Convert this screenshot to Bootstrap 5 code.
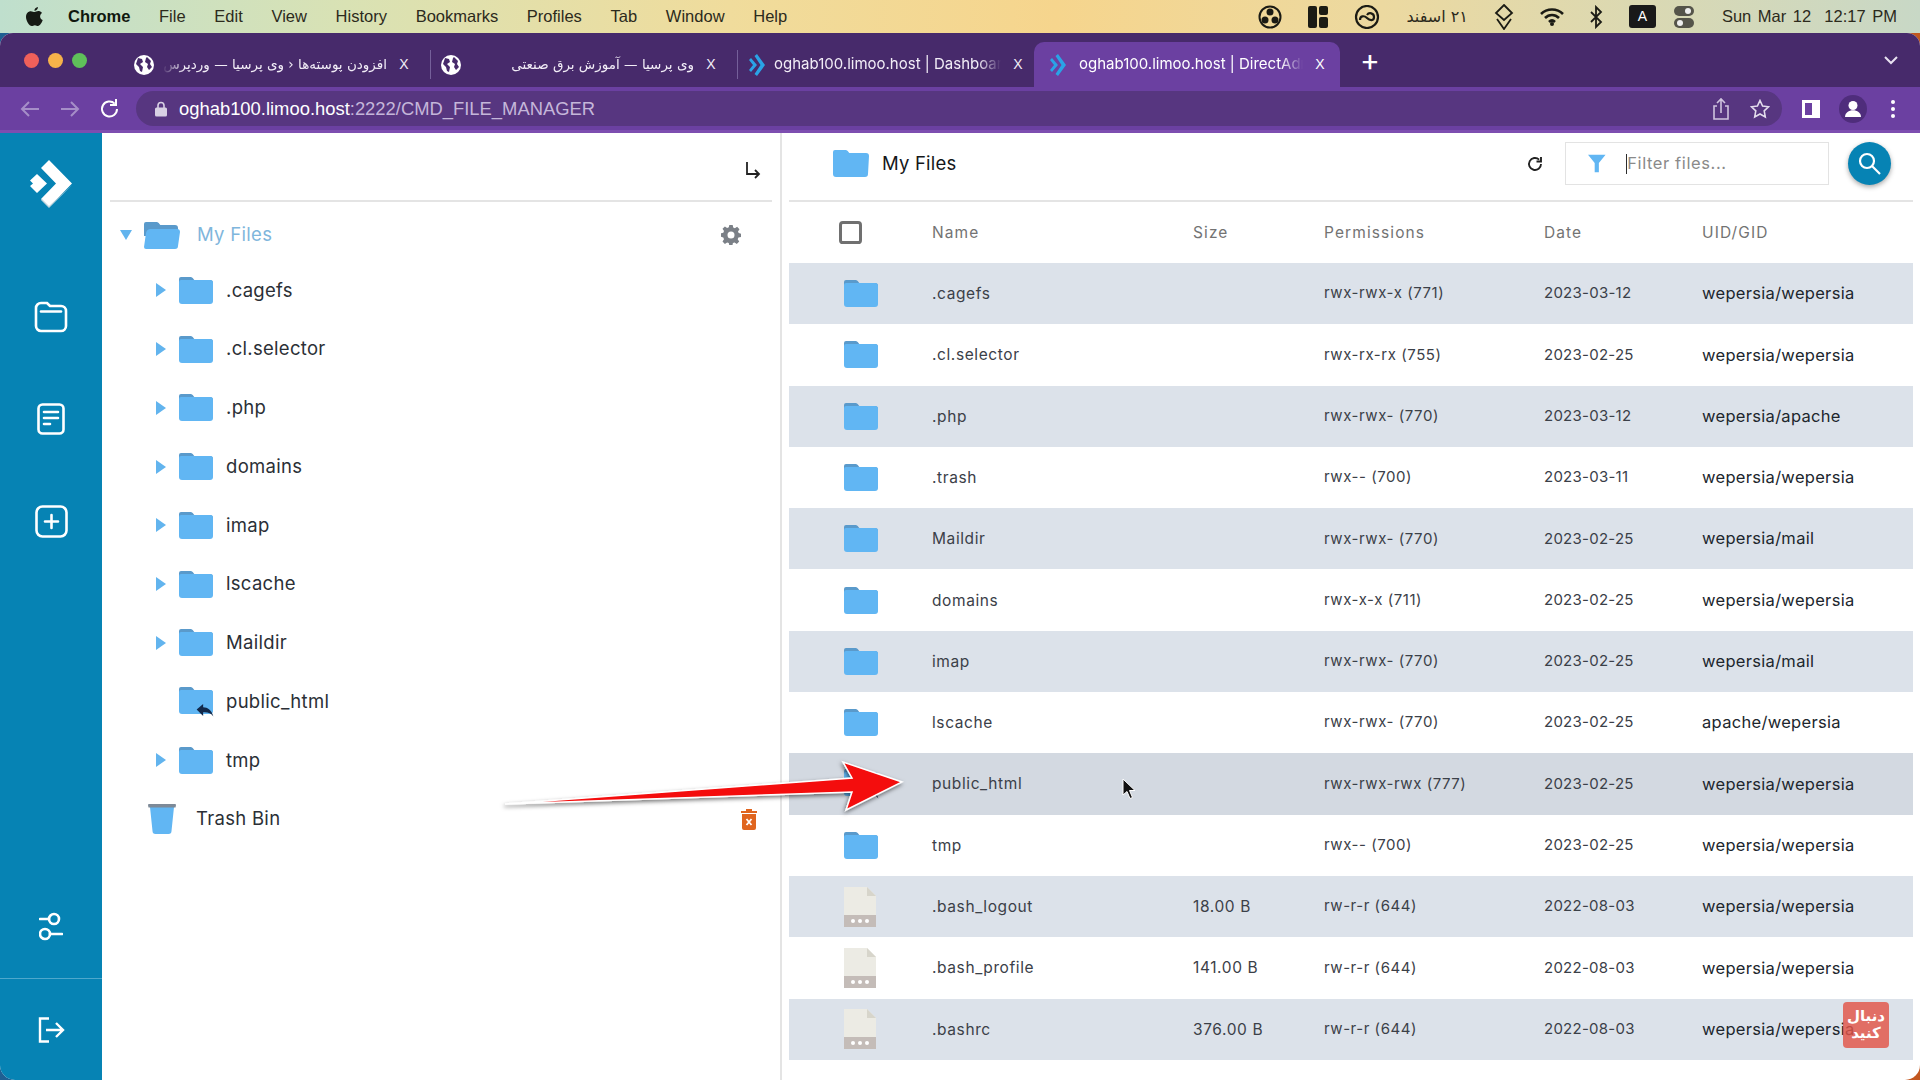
<!DOCTYPE html>
<html lang="en">
<head>
    <meta charset="UTF-8">
    <meta name="viewport" content="width=device-width, initial-scale=1.0">
    <title>oghab100.limoo.host | DirectAdmin</title>
    <link href="https://cdn.jsdelivr.net/npm/bootstrap@5.3.3/dist/css/bootstrap.min.css" rel="stylesheet">
    <style>
        html, body { height: 100%; }
        body { width: 1920px; height: 1080px; overflow: hidden; position: relative; font-family: Inter, "Liberation Sans", sans-serif; background: linear-gradient(90deg, #1f5f92 0, #1f5f92 50%, #c2571f 50%, #c2571f 100%); }

        .mac-bar { height: 33px; padding: 0 23px 0 26px; font-family: "Liberation Sans", sans-serif; font-size: 16.5px; color: #2c2a1c; background: linear-gradient(90deg, #bfdfcd 0, #d9e2b4 18%, #f0dc9c 38%, #f6d58d 55%, #ecd9a0 72%, #c8d8c6 100%); }
        .mac-menu { gap: 28.7px; margin-left: 25px; }
        .mac-app { font-weight: 700; color: #10180f; }
        .mac-tray { gap: 26px; }
        .mac-clock { word-spacing: 2px; margin-left: 2px; }
        .mac-fa { font-family: "DejaVu Sans", sans-serif; font-size: 16px; }
        .key-a { width: 27px; height: 23px; background: #191919; color: #fff; border-radius: 3px; font-size: 14px; }
        .mac-toggle { margin-left: -8px; }

        .win { height: 1047px; border-radius: 13px 13px 15px 15px; overflow: hidden; background: #fff; }
        .tab-strip { height: 54px; background: #472a6b; padding-left: 24px; position: relative; }
        .win-dots { gap: 9px; width: 100px; }
        .win-dot { width: 15px; height: 15px; border-radius: 50%; }
        .dot-red { background: #f0605a; }
        .dot-amber { background: #f6b24a; }
        .dot-green { background: #5fc05a; }
        .tab-item { width: 306px; height: 45px; align-self: flex-end; color: #f2edf7; font-size: 15px; padding: 0 17px 0 10px; position: relative; }
        .tab-on { background: #6b40a1; border-radius: 10px 10px 0 0; color: #fff; margin-left: -10px; padding: 0 11px 0 15px; }
        .tab-on .tab-label { margin-left: 12px; }
        .tab-sep { width: 1px; height: 29px; background: #75609a; align-self: center; margin-top: 8px; }
        .tab-label { flex: 1; overflow: hidden; white-space: nowrap; margin: 0 8px; -webkit-mask-image: linear-gradient(90deg, #000 90%, transparent); mask-image: linear-gradient(90deg, #000 90%, transparent); }
        .tab-fa { font-family: "DejaVu Sans", sans-serif; font-size: 13.5px; direction: rtl; text-align: right; -webkit-mask-image: linear-gradient(270deg, #000 90%, transparent); mask-image: linear-gradient(270deg, #000 90%, transparent); }
        .tab-x { font-size: 14px; font-family: "Liberation Sans", sans-serif; width: 18px; text-align: center; }
        .tab-plus { color: #fff; font-size: 30px; line-height: 1; margin-left: 20px; font-weight: 400; }
        .tab-more { margin-left: auto; margin-right: 22px; }

        .tool-bar { height: 43px; background: #6b40a1; padding: 0 0 0 18px; }
        .tool-ico { width: 24px; height: 24px; }
        .url-pill { height: 35px; width: 1646px; margin-left: 14px; background: #573680; border-radius: 18px; padding: 0 12px 0 19px; color: #c5b6da; font-family: "Liberation Sans", sans-serif; font-size: 18.4px; }
        .url-host { color: #fff; }
        .url-star { margin-left: 20px; }
        .tool-right { gap: 19px; margin-left: 20px; }
        .tool-dots { margin-left: 5px; }
        .strip-line { height: 3px; background: #7d4eb0; }

        .app-main { height: 947px; }
        .side-rail { width: 102px; background: #0683b4; color: #fff; }
        .rail-btn { height: 102px; }
        .rail-logo { margin-bottom: 31px; }
        .rail-foot { border-top: 1px solid #4ea8cc; }

        .tree-pane { width: 680px; border-right: 2px solid #e4e4e4; }
        .pane-head { height: 69px; border-bottom: 2px solid #e4e4e4; }
        .tree-head { margin: 0 8px; padding-right: 11px; padding-top: 8px; }
        .tree-list { padding: 7px 0 0; margin: 0; list-style: none; font-size: 18.5px; color: #2b2f36; letter-spacing: .3px; }
        .tree-row { height: 58.75px; padding-left: 54px; }
        .tree-top { height: 52px; padding-left: 18px; color: #7fb6dc; }
        .tree-bin { padding-left: 46px; }
        .tree-caret { width: 10px; height: 14px; margin-right: 13px; flex: none; }
        .caret-down { width: 12px; height: 10px; margin-right: 12px; }
        .tree-name { margin-left: 13px; }
        .name-top { margin-left: 17px; }
        .name-link { margin-left: 11px; }
        .name-bin { margin-left: 20px; }
        .tree-gear { margin-left: auto; margin-right: 39px; }
        .tree-trash { margin-left: auto; margin-right: 23px; }

        .files-pane { flex: 1; padding: 0 7px; }
        .files-head { padding: 0 0 6px 44px; }
        .files-title { font-size: 18.5px; color: #14171a; margin-left: 13px; letter-spacing: .2px; }
        .reload-btn { margin-left: auto; margin-right: 22px; }
        .filter-box { width: 264px; height: 43px; border: 1px solid #e3e3e3; padding-left: 22px; }
        .filter-caret { width: 2px; height: 20px; background: #2d2d2d; margin-left: 20px; }
        .filter-input { border: 0; padding: 0; font-size: 16.5px; letter-spacing: .6px; box-shadow: none; }
        .filter-input::placeholder { color: #8a8a8a; }
        .find-btn { width: 43px; height: 43px; margin: 0 22px 0 19px; padding: 0; background: #0683b4; border: 0; box-shadow: 0 2px 5px rgba(0,0,0,.35); }

        .file-table { table-layout: fixed; width: 1124px; margin: 0; font-size: 15.5px; color: #3b4048; letter-spacing: .6px; }
        .file-table th, .file-table td { padding: 0; border: 0; vertical-align: middle; background: transparent; box-shadow: none; color: inherit; }
        .file-table thead th { height: 61px; font-weight: 400; color: #737373; letter-spacing: 1.1px; }
        .file-table tbody tr { height: 61.3px; }
        .file-table tbody tr.row-alt td { background: #dce2ea; }
        .file-table tbody tr.row-hover td { background: #d3d9e1; }
        .file-table td.cell-ico { padding-left: 55px; }
        .file-table td.cell-owner { color: #20262d; font-size: 16.5px; letter-spacing: .3px; }
        .file-table td.cell-perm { font-size: 15px; letter-spacing: .55px; }
        .file-table td.cell-date { font-size: 15px; letter-spacing: .25px; }
        .col-tick { width: 143px; }
        .col-name { width: 261px; }
        .col-size { width: 131px; }
        .col-perm { width: 220px; }
        .col-date { width: 158px; }
        .col-owner { width: 211px; }
        .select-all { width: 23px; height: 23px; margin: 0 0 0 50px; border: 3px solid #707070; border-radius: 3px; display: block; }
        .ico-block { display: block; }

        .over-arrow { position: absolute; left: 495px; top: 750px; pointer-events: none; }
        .over-cursor { position: absolute; left: 1122px; top: 778px; }
        .over-follow { position: absolute; left: 1843px; top: 1002px; width: 46px; height: 46px; background: rgba(226,84,72,.82); border-radius: 4px; color: #fff; font-family: "DejaVu Sans", sans-serif; font-weight: 700; font-size: 15px; line-height: 1.15; text-align: center; }
    </style>
</head>
<body>

<svg width="0" height="0" class="position-absolute">
    <symbol id="dir" viewBox="0 0 34 27">
        <path d="M2 0h9c1.500 0 2.500.6 3.500 2l.8 1H31a3 3 0 0 1 3 3v5H0V2a2 2 0 0 1 2-2z" fill="#5a9acb"/>
        <path d="M2 3h29a3 3 0 0 1 3 3v18a3 3 0 0 1-3 3H3a3 3 0 0 1-3-3V5a2 2 0 0 1 2-2z" fill="#61b6f3"/>
    </symbol>
    <symbol id="dir-open" viewBox="0 0 36 27">
        <path d="M2 0h10c1.500 0 2.500.6 3.500 2l.8 1H31a3 3 0 0 1 3 3v8H0V2a2 2 0 0 1 2-2z" fill="#5a9acb"/>
        <path d="M6 7h27a3 3 0 0 1 3 3l-2 14a3 3 0 0 1-3 3H2a2 2 0 0 1-2-2l2-14a5 5 0 0 1 4-4z" fill="#61b6f3"/>
    </symbol>
    <symbol id="dir-flat" viewBox="0 0 36 27">
        <path d="M2 0h10c1.500 0 2.500.6 3.500 2l.8 1H33a3 3 0 0 1 3 3l-1 18a3 3 0 0 1-3 3H3a3 3 0 0 1-3-3V2a2 2 0 0 1 2-2z" fill="#61b6f3"/>
    </symbol>
    <symbol id="doc" viewBox="0 0 32 40">
        <path d="M0 0h23l9 9v31H0z" fill="#ecebe4"/>
        <path d="M23 0l9 9h-9z" fill="#d7d5cb"/>
        <rect y="28" width="32" height="12" fill="#c4bcb8"/>
        <circle cx="9" cy="34" r="2" fill="#fff"/><circle cx="16" cy="34" r="2" fill="#fff"/><circle cx="23" cy="34" r="2" fill="#fff"/>
    </symbol>
    <symbol id="link-arrow" viewBox="0 0 18 14">
        <path d="M0 6L7 0v3.500c5 0 9 3 11 10-2.500-4-6-5-11-4.700V13z" fill="#12294a"/>
    </symbol>
    <symbol id="da-tab" viewBox="0 0 16 22">
        <path d="M2 4l6 7-6 7-2-2 4-5-4-5z" fill="#2aa3e6"/>
        <path d="M8 0l8 11-8 11-2.500-2 6-9-6-9z" fill="#2aa3e6"/>
    </symbol>
    <symbol id="globe" viewBox="0 0 20 20">
        <circle cx="10" cy="10" r="10" fill="#fff"/>
        <path d="M4 3l4 1 1 3-3 2 3 3-1 5-2-1-1-4-3-3zM13 2l4 4-1 3 2 3-3 3-2-3 1-3-3-2 1-4z" fill="#472a6b"/>
    </symbol>
</svg>

<div class="mac-bar d-flex align-items-center">
    <svg width="17" height="20" viewBox="0 0 17 20"><path d="M12 0c.2 1.800-1.700 4-3.600 3.800C8.200 2 10 .2 12 0zM8.600 5c1 0 2-.9 3.700-.9 1.100 0 2.800.6 3.700 2-2.800 1.700-2.400 5.800.7 7-.8 2.300-2.700 5.900-4.700 5.900-1.100 0-1.700-.8-3.100-.8s-2 .8-3.200.8C3.300 19 0 14 0 10c0-3.700 2.400-5.800 4.800-5.800 1.600 0 2.800.8 3.800.8z" fill="#161a14"/></svg>
    <div class="mac-menu d-flex">
        <span class="mac-app">Chrome</span><span>File</span><span>Edit</span><span>View</span><span>History</span><span>Bookmarks</span><span>Profiles</span><span>Tab</span><span>Window</span><span>Help</span>
    </div>
    <div class="mac-tray d-flex align-items-center ms-auto">
        <svg width="24" height="24" viewBox="0 0 24 24"><circle cx="12" cy="12" r="10.500" fill="none" stroke="#1b1b14" stroke-width="2"/><circle cx="12" cy="7" r="3.500" fill="#1b1b14"/><circle cx="7" cy="15" r="3.500" fill="#1b1b14"/><circle cx="17" cy="15" r="3.500" fill="#1b1b14"/></svg>
        <svg width="20" height="22" viewBox="0 0 20 22"><rect width="9" height="22" rx="2" fill="#1b1b14"/><rect x="11" width="9" height="9" rx="2" fill="#1b1b14"/><rect x="11" y="11" width="9" height="11" rx="2" fill="#1b1b14"/></svg>
        <svg width="26" height="24" viewBox="0 0 26 24" fill="none" stroke="#1b1b14" stroke-width="2.200"><circle cx="13" cy="12" r="11"/><path d="M6 15c0-4 4-5 7-2s7 3 7-1-5-5-7-2"/></svg>
        <span class="mac-fa" dir="rtl">۲۱ اسفند</span>
        <svg width="20" height="26" viewBox="0 0 20 26" fill="none" stroke="#1b1b14" stroke-width="1.800"><path d="M10 1l8 8-8 7-8-7zM3 15l7 10 7-10"/></svg>
        <svg width="24" height="18" viewBox="0 0 24 18"><path d="M1 6c6-6 16-6 22 0M5 10c4-4 10-4 14 0M9 14c2-2 4-2 6 0" fill="none" stroke="#1b1b14" stroke-width="2.600"/><circle cx="12" cy="16" r="2" fill="#1b1b14"/></svg>
        <svg width="13" height="24" viewBox="0 0 13 24"><path d="M1 7l10 10-5 5V2l5 5L1 17" fill="none" stroke="#1b1b14" stroke-width="1.800"/></svg>
        <span class="key-a d-flex align-items-center justify-content-center">A</span>
        <svg class="mac-toggle" width="20" height="24" viewBox="0 0 20 24"><rect y="1" width="20" height="10" rx="5" fill="#55544a"/><circle cx="14" cy="6" r="3" fill="#eee"/><rect y="13" width="20" height="10" rx="5" fill="#55544a"/><circle cx="6" cy="18" r="3" fill="#eee"/></svg>
        <span class="mac-clock">Sun Mar 12 &nbsp;12:17 PM</span>
    </div>
</div>

<div class="win d-flex flex-column">
    <div class="tab-strip d-flex align-items-center">
        <div class="win-dots d-flex">
            <span class="win-dot dot-red"></span>
            <span class="win-dot dot-amber"></span>
            <span class="win-dot dot-green"></span>
        </div>
        <div class="tab-item d-flex align-items-center">
            <svg width="20" height="20"><use href="#globe"/></svg>
            <span class="tab-label tab-fa">افزودن پوسته‌ها ‹ وی پرسیا — وردپرس</span>
            <span class="tab-x">X</span>
        </div>
        <span class="tab-sep"></span>
        <div class="tab-item d-flex align-items-center">
            <svg width="20" height="20"><use href="#globe"/></svg>
            <span class="tab-label tab-fa">وی پرسیا — آموزش برق صنعتی</span>
            <span class="tab-x">X</span>
        </div>
        <span class="tab-sep"></span>
        <div class="tab-item d-flex align-items-center">
            <svg width="18" height="22"><use href="#da-tab"/></svg>
            <span class="tab-label">oghab100.limoo.host | Dashboard</span>
            <span class="tab-x">X</span>
        </div>
        <div class="tab-item tab-on d-flex align-items-center">
            <svg width="18" height="22"><use href="#da-tab"/></svg>
            <span class="tab-label">oghab100.limoo.host | DirectAdmin</span>
            <span class="tab-x">X</span>
        </div>
        <span class="tab-plus">+</span>
        <svg class="tab-more" width="14" height="9" viewBox="0 0 14 9"><path d="M1 1l6 6 6-6" fill="none" stroke="#e8e2f0" stroke-width="2"/></svg>
    </div>

    <div class="tool-bar d-flex align-items-center">
        <svg class="tool-ico me-3" viewBox="0 0 24 24"><path d="M21 12H4M11 5l-7 7 7 7" fill="none" stroke="#a68ec8" stroke-width="2"/></svg>
        <svg class="tool-ico me-3" viewBox="0 0 24 24"><path d="M3 12h17M13 5l7 7-7 7" fill="none" stroke="#a68ec8" stroke-width="2"/></svg>
        <svg class="tool-ico" viewBox="0 0 24 24"><path d="M19 12a7.500 7.500 0 1 1-2.300-5.400M18 2v6h-6" fill="none" stroke="#fff" stroke-width="2"/></svg>
        <div class="url-pill d-flex align-items-center">
            <svg class="me-2" width="12" height="16" viewBox="0 0 12 16"><path d="M3 7V4.500a3 3 0 0 1 6 0V7" fill="none" stroke="#d8d0e4" stroke-width="1.600"/><rect y="6.500" width="12" height="9" rx="1.500" fill="#d8d0e4"/></svg>
            <span class="ms-1"><span class="url-host">oghab100.limoo.host</span>:2222/CMD_FILE_MANAGER</span>
            <svg class="ms-auto" width="18" height="24" viewBox="0 0 18 24" fill="none" stroke="#cfc4de" stroke-width="1.600"><path d="M5 9H2v13h14V9h-3M9 16V2M5 6l4-4 4 4"/></svg>
            <svg class="url-star" width="20" height="20" viewBox="0 0 20 20"><path d="M10 1.500l2.600 5.500 6 .8-4.400 4.100 1.100 6L10 15l-5.300 2.900 1.100-6-4.400-4.100 6-.8z" fill="none" stroke="#e3dcec" stroke-width="1.600"/></svg>
        </div>
        <div class="tool-right d-flex align-items-center">
            <svg width="18" height="18" viewBox="0 0 18 18"><path d="M0 0h18v18H0z" fill="#fff"/><path d="M3 3h7v12H3z" fill="#6b40a1"/></svg>
            <svg width="28" height="28" viewBox="0 0 28 28"><circle cx="14" cy="14" r="14" fill="#4f2d7c"/><circle cx="14" cy="10.500" r="4.500" fill="#fff"/><path d="M6 22c0-9 16-9 16 0z" fill="#fff"/></svg>
            <svg class="tool-dots" width="4" height="18" viewBox="0 0 4 18"><circle cx="2" cy="2" r="2" fill="#fff"/><circle cx="2" cy="9" r="2" fill="#fff"/><circle cx="2" cy="16" r="2" fill="#fff"/></svg>
        </div>
    </div>
    <div class="strip-line"></div>

    <div class="app-main d-flex">
        <nav class="side-rail d-flex flex-column">
            <a class="rail-btn rail-logo d-flex align-items-center justify-content-center">
                <svg width="42" height="48" viewBox="0 0 42 48"><path d="M19 0l23 23.500L19 47l-8-8 15-15.500L11 8z" fill="#fff"/><path d="M7 14l10 9.500L7 33l-7-7 3-2.500-3-3z" fill="#fff"/><path d="M42 25L19 48l-8-8 1-1 7 7z" fill="#c2d6df"/></svg>
            </a>
            <a class="rail-btn d-flex align-items-center justify-content-center">
                <svg width="34" height="32" viewBox="0 0 34 32" fill="none" stroke="#fff" stroke-width="2.600"><path d="M2 9V7a5 5 0 0 1 5-5h6l3 3h11a5 5 0 0 1 5 5v15a5 5 0 0 1-5 5H7a5 5 0 0 1-5-5z"/><path d="M7 10.500h20" stroke-linecap="round"/></svg>
            </a>
            <a class="rail-btn d-flex align-items-center justify-content-center">
                <svg width="28" height="32" viewBox="0 0 28 32" fill="none" stroke="#fff" stroke-width="2.600" stroke-linecap="round"><rect x="1.500" y="1.500" width="25" height="29" rx="4"/><path d="M7 9h14M7 15h14M7 21h6"/></svg>
            </a>
            <a class="rail-btn d-flex align-items-center justify-content-center">
                <svg width="33" height="33" viewBox="0 0 33 33" fill="none" stroke="#fff" stroke-width="2.600" stroke-linecap="round"><rect x="1.500" y="1.500" width="30" height="30" rx="6"/><path d="M16.500 10v13M10 16.500h13"/></svg>
            </a>
            <a class="rail-btn mt-auto d-flex align-items-center justify-content-center">
                <svg width="24" height="30" viewBox="0 0 24 30" fill="none" stroke="#fff" stroke-width="2.600" stroke-linecap="round"><circle cx="15" cy="7" r="5"/><path d="M1 7h9"/><circle cx="6" cy="22" r="5"/><path d="M11 22h12"/></svg>
            </a>
            <a class="rail-btn rail-foot d-flex align-items-center justify-content-center">
                <svg width="27" height="26" viewBox="0 0 27 26" fill="none" stroke="#fff" stroke-width="2.400"><path d="M11 1.500H2v23h9M8 13h17M18 6l7 7-7 7"/></svg>
            </a>
        </nav>

        <section class="tree-pane">
            <div class="pane-head tree-head d-flex align-items-center justify-content-end">
                <svg width="16" height="18" viewBox="0 0 16 18"><path d="M2 0v12h12M10 8l4 4-4 4" fill="none" stroke="#222" stroke-width="1.800"/></svg>
            </div>
            <ul class="tree-list">
                <li class="tree-top d-flex align-items-center">
                    <svg class="caret-down" viewBox="0 0 12 10"><path d="M0 0h12L6 10z" fill="#62b4ee"/></svg>
                    <svg width="36" height="27"><use href="#dir-open"/></svg>
                    <span class="tree-name name-top">My Files</span>
                    <svg class="tree-gear" width="20" height="20" viewBox="0 0 20 20"><path d="M8.300 0h3.400l.5 2.600 1.700.7 2.200-1.500 2.400 2.400-1.500 2.200.7 1.700 2.300.6v3.400l-2.600.5-.7 1.700 1.500 2.200-2.400 2.400-2.200-1.500-1.700.7-.5 2.600H8.300l-.5-2.600-1.700-.7-2.200 1.500-2.400-2.400 1.500-2.200-.7-1.700L0 11.700V8.300l2.300-.6.7-1.700-1.500-2.200 2.400-2.400 2.200 1.500 1.700-.7zM10 6.500a3.500 3.500 0 1 0 0 7 3.500 3.500 0 0 0 0-7z" fill="#7b8087" fill-rule="evenodd"/></svg>
                </li>
                <li class="tree-row d-flex align-items-center"><svg class="tree-caret" viewBox="0 0 10 14"><path d="M0 0l10 7-10 7z" fill="#62b4ee"/></svg><svg width="34" height="27"><use href="#dir"/></svg><span class="tree-name">.cagefs</span></li>
                <li class="tree-row d-flex align-items-center"><svg class="tree-caret" viewBox="0 0 10 14"><path d="M0 0l10 7-10 7z" fill="#62b4ee"/></svg><svg width="34" height="27"><use href="#dir"/></svg><span class="tree-name">.cl.selector</span></li>
                <li class="tree-row d-flex align-items-center"><svg class="tree-caret" viewBox="0 0 10 14"><path d="M0 0l10 7-10 7z" fill="#62b4ee"/></svg><svg width="34" height="27"><use href="#dir"/></svg><span class="tree-name">.php</span></li>
                <li class="tree-row d-flex align-items-center"><svg class="tree-caret" viewBox="0 0 10 14"><path d="M0 0l10 7-10 7z" fill="#62b4ee"/></svg><svg width="34" height="27"><use href="#dir"/></svg><span class="tree-name">domains</span></li>
                <li class="tree-row d-flex align-items-center"><svg class="tree-caret" viewBox="0 0 10 14"><path d="M0 0l10 7-10 7z" fill="#62b4ee"/></svg><svg width="34" height="27"><use href="#dir"/></svg><span class="tree-name">imap</span></li>
                <li class="tree-row d-flex align-items-center"><svg class="tree-caret" viewBox="0 0 10 14"><path d="M0 0l10 7-10 7z" fill="#62b4ee"/></svg><svg width="34" height="27"><use href="#dir"/></svg><span class="tree-name">lscache</span></li>
                <li class="tree-row d-flex align-items-center"><svg class="tree-caret" viewBox="0 0 10 14"><path d="M0 0l10 7-10 7z" fill="#62b4ee"/></svg><svg width="34" height="27"><use href="#dir"/></svg><span class="tree-name">Maildir</span></li>
                <li class="tree-row d-flex align-items-center">
                    <span class="tree-caret"></span>
                    <svg width="36" height="30" viewBox="0 0 36 30"><use href="#dir" width="34" height="27"/><use href="#link-arrow" x="17" y="17" width="18" height="13"/></svg>
                    <span class="tree-name name-link">public_html</span>
                </li>
                <li class="tree-row d-flex align-items-center"><svg class="tree-caret" viewBox="0 0 10 14"><path d="M0 0l10 7-10 7z" fill="#62b4ee"/></svg><svg width="34" height="27"><use href="#dir"/></svg><span class="tree-name">tmp</span></li>
                <li class="tree-row tree-bin d-flex align-items-center">
                    <svg width="28" height="30" viewBox="0 0 28 30"><path d="M2 3h24l-2.500 24a3 3 0 0 1-3 3h-13a3 3 0 0 1-3-3z" fill="#61b6f3"/><path d="M1 0h26a1 1 0 0 1 1 1l-.5 2.500H.5L0 1a1 1 0 0 1 1-1z" fill="#7d8a98"/></svg>
                    <span class="tree-name name-bin">Trash Bin</span>
                    <svg class="tree-trash" width="16" height="21" viewBox="0 0 16 21"><path d="M5 0h6v2h5v2H0V2h5z" fill="#e0651f"/><path d="M1 5h14v14a2 2 0 0 1-2 2H3a2 2 0 0 1-2-2z" fill="#e0651f"/><path d="M5.500 10l5 6m0-6l-5 6" stroke="#fff" stroke-width="1.800"/></svg>
                </li>
            </ul>
        </section>

        <section class="files-pane">
            <div class="pane-head files-head d-flex align-items-center">
                <svg width="36" height="27"><use href="#dir-flat"/></svg>
                <span class="files-title">My Files</span>
                <svg class="reload-btn" width="16" height="16" viewBox="0 0 16 16"><path d="M14 8a6 6 0 1 1-1.900-4.400M14 1v4.500H9.500" fill="none" stroke="#222" stroke-width="1.900"/></svg>
                <div class="filter-box d-flex align-items-center">
                    <svg width="21" height="21" viewBox="0 0 21 21"><path d="M0 0h21l-8 10v11H8V10z" fill="#61b6f3"/></svg>
                    <span class="filter-caret"></span>
                    <input class="form-control filter-input" type="text" placeholder="Filter files...">
                </div>
                <button class="btn find-btn rounded-circle d-flex align-items-center justify-content-center" type="button">
                    <svg width="23" height="23" viewBox="0 0 23 23" fill="none" stroke="#fff" stroke-width="2.200"><circle cx="9" cy="9" r="7"/><path d="M14 14l8 8"/></svg>
                </button>
            </div>
            <table class="table file-table">
                <colgroup><col class="col-tick"><col class="col-name"><col class="col-size"><col class="col-perm"><col class="col-date"><col class="col-owner"></colgroup>
                <thead>
                    <tr><th><input class="form-check-input select-all" type="checkbox" aria-label="Select all"></th><th>Name</th><th>Size</th><th>Permissions</th><th>Date</th><th>UID/GID</th></tr>
                </thead>
                <tbody>
                    <tr class="row-alt"><td class="cell-ico"><svg class="ico-block" width="34" height="27"><use href="#dir"/></svg></td><td>.cagefs</td><td></td><td class="cell-perm">rwx-rwx-x (771)</td><td class="cell-date">2023-03-12</td><td class="cell-owner">wepersia/wepersia</td></tr>
                    <tr><td class="cell-ico"><svg class="ico-block" width="34" height="27"><use href="#dir"/></svg></td><td>.cl.selector</td><td></td><td class="cell-perm">rwx-rx-rx (755)</td><td class="cell-date">2023-02-25</td><td class="cell-owner">wepersia/wepersia</td></tr>
                    <tr class="row-alt"><td class="cell-ico"><svg class="ico-block" width="34" height="27"><use href="#dir"/></svg></td><td>.php</td><td></td><td class="cell-perm">rwx-rwx- (770)</td><td class="cell-date">2023-03-12</td><td class="cell-owner">wepersia/apache</td></tr>
                    <tr><td class="cell-ico"><svg class="ico-block" width="34" height="27"><use href="#dir"/></svg></td><td>.trash</td><td></td><td class="cell-perm">rwx-- (700)</td><td class="cell-date">2023-03-11</td><td class="cell-owner">wepersia/wepersia</td></tr>
                    <tr class="row-alt"><td class="cell-ico"><svg class="ico-block" width="34" height="27"><use href="#dir"/></svg></td><td>Maildir</td><td></td><td class="cell-perm">rwx-rwx- (770)</td><td class="cell-date">2023-02-25</td><td class="cell-owner">wepersia/mail</td></tr>
                    <tr><td class="cell-ico"><svg class="ico-block" width="34" height="27"><use href="#dir"/></svg></td><td>domains</td><td></td><td class="cell-perm">rwx-x-x (711)</td><td class="cell-date">2023-02-25</td><td class="cell-owner">wepersia/wepersia</td></tr>
                    <tr class="row-alt"><td class="cell-ico"><svg class="ico-block" width="34" height="27"><use href="#dir"/></svg></td><td>imap</td><td></td><td class="cell-perm">rwx-rwx- (770)</td><td class="cell-date">2023-02-25</td><td class="cell-owner">wepersia/mail</td></tr>
                    <tr><td class="cell-ico"><svg class="ico-block" width="34" height="27"><use href="#dir"/></svg></td><td>lscache</td><td></td><td class="cell-perm">rwx-rwx- (770)</td><td class="cell-date">2023-02-25</td><td class="cell-owner">apache/wepersia</td></tr>
                    <tr class="row-hover"><td class="cell-ico"><svg class="ico-block" width="36" height="30" viewBox="0 0 36 30"><use href="#dir" width="34" height="27"/><use href="#link-arrow" x="17" y="17" width="18" height="13"/></svg></td><td>public_html</td><td></td><td class="cell-perm">rwx-rwx-rwx (777)</td><td class="cell-date">2023-02-25</td><td class="cell-owner">wepersia/wepersia</td></tr>
                    <tr><td class="cell-ico"><svg class="ico-block" width="34" height="27"><use href="#dir"/></svg></td><td>tmp</td><td></td><td class="cell-perm">rwx-- (700)</td><td class="cell-date">2023-02-25</td><td class="cell-owner">wepersia/wepersia</td></tr>
                    <tr class="row-alt"><td class="cell-ico"><svg class="ico-block" width="32" height="40"><use href="#doc"/></svg></td><td>.bash_logout</td><td>18.00 B</td><td class="cell-perm">rw-r-r (644)</td><td class="cell-date">2022-08-03</td><td class="cell-owner">wepersia/wepersia</td></tr>
                    <tr><td class="cell-ico"><svg class="ico-block" width="32" height="40"><use href="#doc"/></svg></td><td>.bash_profile</td><td>141.00 B</td><td class="cell-perm">rw-r-r (644)</td><td class="cell-date">2022-08-03</td><td class="cell-owner">wepersia/wepersia</td></tr>
                    <tr class="row-alt"><td class="cell-ico"><svg class="ico-block" width="32" height="40"><use href="#doc"/></svg></td><td>.bashrc</td><td>376.00 B</td><td class="cell-perm">rw-r-r (644)</td><td class="cell-date">2022-08-03</td><td class="cell-owner">wepersia/wepersia</td></tr>
                </tbody>
            </table>
        </section>
    </div>
</div>

<svg class="over-arrow" width="420" height="70" viewBox="495 750 420 70">
    <defs><filter id="arrowShade" x="-5%" y="-20%" width="110%" height="150%"><feDropShadow dx="-1" dy="2" stdDeviation="2" flood-color="#000" flood-opacity=".55"/></filter></defs>
    <polygon points="505,804 852,778 843,762 902,782 846,810 852,792" fill="#f40a0a" stroke="#fff" stroke-width="1.500" filter="url(#arrowShade)"/>
</svg>
<svg class="over-cursor" width="14" height="22" viewBox="0 0 14 22"><path d="M1 1v16l4-3.500 3 7 2.500-1-3-7H13z" fill="#111" stroke="#fff" stroke-width="1"/></svg>
<div class="over-follow d-flex align-items-center justify-content-center" dir="rtl">دنبال<br>کنید</div>

<script src="https://cdn.jsdelivr.net/npm/bootstrap@5.3.3/dist/js/bootstrap.bundle.min.js"></script>
</body>
</html>
